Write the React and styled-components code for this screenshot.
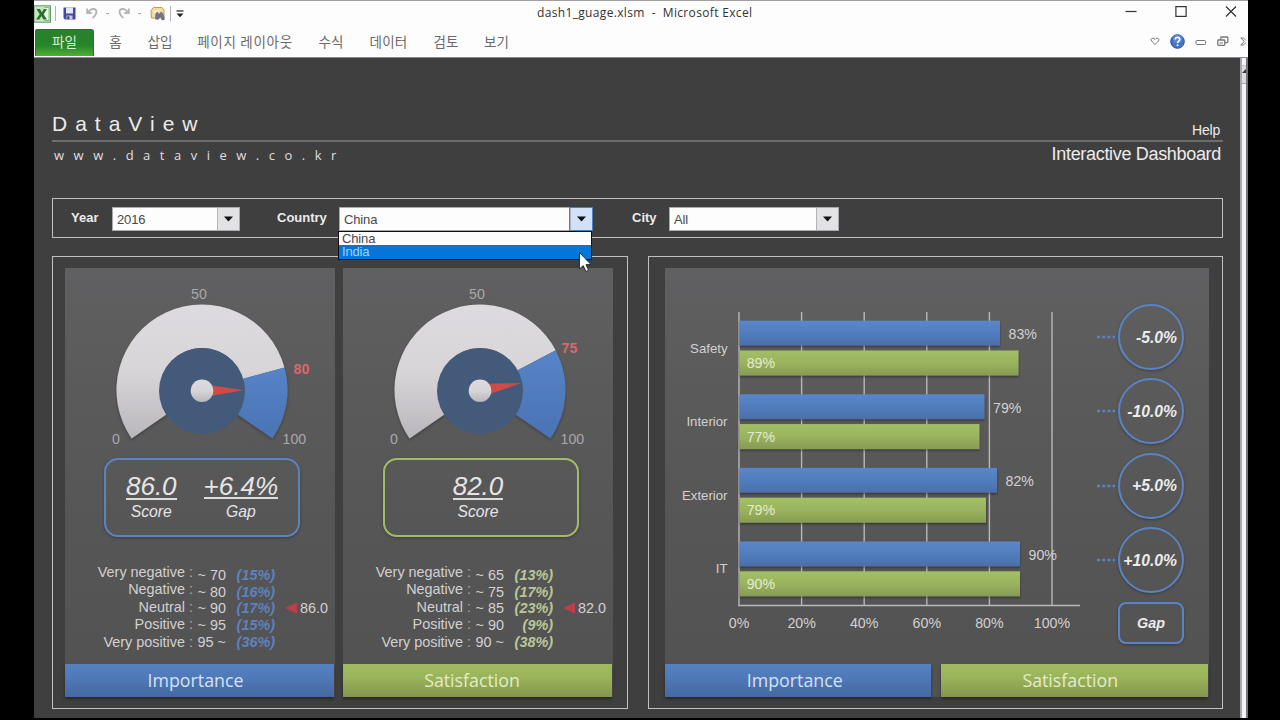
import styled, { createGlobalStyle } from "styled-components";

const BLUE = "#5b83c4";
const GREEN = "#a3bb66";

const GlobalStyle = createGlobalStyle`
  * {
    box-sizing: border-box;
  }
  body {
    margin: 0;
    background-color: #000;
    font-family: "Liberation Sans", Arial, sans-serif;
    overflow: hidden;
  }
  svg {
    display: block;
    flex-shrink: 0;
  }
`;

const Screen = styled.div`
  width: 1280px;
  height: 720px;
  padding: 0 32px 2px 34px;
  overflow: hidden;
  background-color: #000;
`;

const Window = styled.div`
  height: 718px;
  overflow: hidden;
  background-color: #fefdfe;
  border-top: 1px solid #a39fa1;
`;

const TitleBar = styled.div`
  display: grid;
  grid-template-columns: 503px 217px 1fr;
  height: 27px;
`;

const QuickAccess = styled.div`
  display: flex;
  align-items: center;
  height: 25px;
`;

const Divider = styled.span`
  width: 1px;
  height: 15px;
  margin: 0 ${(props) => props.$right}px 0 ${(props) => props.$left}px;
  background-color: #b5b2b8;
`;

const Tick = styled.span`
  width: 3px;
  height: 1px;
  margin: 0 9px 0 8px;
  background-color: #aaa;
`;

const IconSpace = styled.span`
  width: 10px;
`;

const Caption = styled.div`
  font-family: "Open Sans", "Noto Sans", sans-serif;
  font-size: 12px;
  line-height: 24px;
  letter-spacing: 0.34px;
  color: #333;
  white-space: pre;
`;

const WindowButtons = styled.div`
  display: flex;
  justify-content: flex-end;
  gap: 38px;
  padding: 5px 11px 0 0;
`;

const Ribbon = styled.div`
  display: flex;
  align-items: flex-start;
  height: 30px;
  padding: 1px 0 0 1px;
  border-bottom: 1px solid #8c8b8d;
  font-family: "Noto Sans CJK KR", sans-serif;
  font-size: 13.5px;
  line-height: 25px;
  color: #6a6a6a;
`;

const FileTab = styled.div`
  width: 59px;
  height: 27px;
  border-radius: 2px 3px 0 0;
  border: 1px solid #23762a;
  border-bottom: none;
  line-height: 23px;
  text-align: center;
  color: #dcefd4;
  background: linear-gradient(#2b7f2d, #26862a 60%, #4fae35);
`;

const Tab = styled.div`
  width: ${(props) => props.$width}px;
  text-align: center;
  letter-spacing: ${(props) => props.$spacing || 0.2}px;
  white-space: nowrap;
`;

const RibbonTools = styled.div`
  display: flex;
  align-items: center;
  gap: 10px;
  height: 25px;
  margin-left: auto;
  width: 98px;
  overflow: hidden;
`;

const Body = styled.div`
  display: flex;
  height: 660px;
`;

const Sheet = styled.div`
  width: 1206px;
  padding: 0 17px 0 18px;
  background-color: #3f3f3f;
  color: #ecebec;
`;

const ScrollTrack = styled.div`
  width: 8px;
  border-left: 2px solid #aaa8ac;
  border-right: 2px solid #77757a;
  background-color: #f5f3f9;
`;

const ScrollTop = styled.div`
  display: flex;
  align-items: flex-end;
  height: 26px;
  padding-bottom: 6px;
  border-bottom: 1px solid #aaa;
  background: linear-gradient(#f4f3f6 7px, #aaa 7px, #dddce2 8px);
`;

const Header = styled.div`
  display: flex;
  justify-content: space-between;
  align-items: flex-end;
  height: 84px;
  border-bottom: 2px solid #6d6d6d;
`;

const Logo = styled.div`
  margin-bottom: 4px;
  font-size: 21px;
  line-height: 24px;
  letter-spacing: 8px;
`;

const Help = styled.div`
  margin: 0 3px 2px 0;
  font-size: 14px;
  line-height: 16px;
  letter-spacing: -0.2px;
`;

const SubHeader = styled.div`
  display: flex;
  justify-content: space-between;
  height: 56px;
`;

const Url = styled.div`
  margin: 3px 0 0 2px;
  font-family: "Open Sans", "Noto Sans", sans-serif;
  font-size: 13px;
  line-height: 20px;
  letter-spacing: 9.5px;
  color: #e0dee0;
`;

const Tagline = styled.div`
  margin: 2px 2px 0 0;
  font-size: 18px;
  line-height: 20px;
  letter-spacing: -0.32px;
`;

const FilterBar = styled.div`
  display: flex;
  height: 40px;
  padding: 8px 0 0 18px;
  border: 1px solid #c2c1c2;
`;

const FilterLabel = styled.div`
  width: ${(props) => props.$width}px;
  font-size: 13px;
  font-weight: bold;
  line-height: 22px;
`;

const Select = styled.div`
  position: relative;
  display: flex;
  justify-content: space-between;
  width: ${(props) => props.$width}px;
  height: 24px;
  margin-right: ${(props) => props.$gap}px;
  border: 1px solid #aaa8ac;
  background-color: #fefdfe;
  font-size: 13px;
  line-height: 23px;
  letter-spacing: -0.15px;
  color: #4a484a;
  padding-left: 4px;
`;

const Arrow = styled.div`
  display: flex;
  align-items: center;
  justify-content: center;
  width: 22px;
  padding-right: 1px;
  background-color: ${(props) => (props.$active ? "#cfe1fb" : "#e2e1e4")};
  border-left: 1px solid #b4b2b6;
  outline: ${(props) => (props.$active ? "1px solid #4d82bd" : "none")};
`;

const Options = styled.div`
  position: absolute;
  top: 23px;
  left: -2px;
  width: 254px;
  border: 1px solid #0c0c14;
  background-color: #fefdfe;
`;

const Option = styled.div`
  height: ${(props) => (props.$active ? 14 : 13)}px;
  padding-left: 3px;
  line-height: 14px;
  color: ${(props) => (props.$active ? "#9fd3ff" : "#4a484a")};
  background-color: ${(props) => (props.$active ? "#0576d8" : "transparent")};
`;

const Cursor = styled.svg`
  position: absolute;
  top: 43px;
  left: 238px;
  z-index: 2;
`;

const Panels = styled.div`
  display: flex;
  justify-content: space-between;
  margin-top: 18px;
`;

const Panel = styled.div`
  display: flex;
  gap: 8px;
  width: ${(props) => props.$width}px;
  height: 453px;
  padding: 11px 0 0 ${(props) => props.$pad}px;
  border: 1px solid #c2c1c2;
`;

const Card = styled.div`
  display: flex;
  flex-direction: column;
  width: ${(props) => props.$width}px;
  height: 429px;
  background: linear-gradient(#606062, #5a5a5a 30%, #575657 60%, #535253);
`;

const ScoreBox = styled.div`
  display: flex;
  justify-content: center;
  gap: 27px;
  width: 196px;
  height: 79px;
  margin: 0 0 0 ${(props) => props.$left}px;
  padding-top: 14px;
  padding-right: ${(props) => props.$shift}px;
  border: 2px solid ${(props) => props.$color};
  border-radius: 14px;
  box-shadow: 0 1px 3px rgba(0, 0, 0, 0.3);
  font-style: italic;
  text-align: center;
  color: #e6e5e6;
`;

const Big = styled.div`
  height: ${(props) => (props.$tight ? 25 : 26)}px;
  border-bottom: 2px solid #dddcdd;
  font-size: 26px;
  line-height: 25px;
`;

const Small = styled.div`
  margin-top: ${(props) => (props.$tight ? 4 : 3)}px;
  font-size: 15.7px;
  line-height: 18px;
`;

const Breakdown = styled.div`
  display: flex;
  height: 127px;
  padding-top: 27px;
  font-size: 14.4px;
  color: #d2d0d2;
`;

const Names = styled.div`
  width: 120px;
  line-height: 17.4px;
  text-align: right;
`;

const Colons = styled.div`
  width: 12px;
  line-height: 17.4px;
  text-align: center;
  color: #aaa;
`;

const Ranges = styled.div`
  width: 29px;
  padding-top: 3px;
  line-height: 16.7px;
  text-align: right;
  white-space: nowrap;
`;

const Shares = styled.div`
  width: 49px;
  padding-top: 3px;
  line-height: 16.7px;
  text-align: right;
  font-weight: bold;
  font-style: italic;
  color: ${(props) => props.$color};
`;

const Current = styled.div`
  display: flex;
  align-items: center;
  gap: 3px;
  height: 17px;
  margin: 35px 0 0 10px;
`;

const Footer = styled.div`
  display: flex;
  gap: 10px;
  margin-top: auto;
  padding-right: 1px;
`;

const Strip = styled.div`
  flex: 1;
  height: 33px;
  padding-right: ${(props) => props.$shift}px;
  font-family: "Open Sans", "Noto Sans", sans-serif;
  font-size: 17.8px;
  line-height: 33px;
  text-align: center;
  color: ${(props) => (props.$green ? "#e4ecc9" : "#d5e1f6")};
  background: ${(props) =>
    props.$green
      ? "linear-gradient(#9fbb60, #9ab459 40%, #84964f)"
      : "linear-gradient(#5581c3, #4f79b8 40%, #4568a0)"};
  box-shadow: 0 2px 3px rgba(0, 0, 0, 0.4);
`;

const ChartArea = styled.div`
  display: flex;
  margin-left: -1px;
`;

const Gaps = styled.div`
  display: flex;
  flex-direction: column;
  gap: 8.4px;
  padding-top: 36px;
`;

const GapRow = styled.div`
  display: flex;
  align-items: center;
  justify-content: space-between;
  width: 88px;
`;

const Circle = styled.div`
  display: flex;
  align-items: center;
  justify-content: flex-end;
  width: 66px;
  height: 66px;
  padding: 1px 5px 0 0;
  border: 2px solid ${BLUE};
  border-radius: 50%;
  box-shadow: 0 1px 3px rgba(0, 0, 0, 0.3);
  font-size: 15.7px;
  font-weight: bold;
  font-style: italic;
  white-space: nowrap;
`;

const GapLabel = styled.div`
  align-self: flex-end;
  width: 66px;
  height: 42px;
  border: 2px solid ${BLUE};
  border-radius: 8px;
  box-shadow: 0 1px 3px rgba(0, 0, 0, 0.3);
  font-size: 14.3px;
  font-weight: bold;
  font-style: italic;
  line-height: 39px;
  text-align: center;
`;

const levels = [
  "Very negative",
  "Negative",
  "Neutral",
  "Positive",
  "Very positive",
];

const importance = {
  limit: 80,
  score: 86,
  limitPos: [228.5, 105.5],
  ranges: ["~ 70", "~ 80", "~ 90", "~ 95", "95 ~"],
  shares: ["(15%)", "(16%)", "(17%)", "(15%)", "(36%)"],
};

const satisfaction = {
  limit: 75,
  score: 82,
  limitPos: [218.5, 85],
  ranges: ["~ 65", "~ 75", "~ 85", "~ 90", "90 ~"],
  shares: ["(13%)", "(17%)", "(23%)", "(9%)", "(38%)"],
};

const bars = [
  { name: "Safety", blue: 83, green: 89, blueEnd: 336, greenEnd: 354.5 },
  { name: "Interior", blue: 79, green: 77, blueEnd: 320.5, greenEnd: 315.5 },
  { name: "Exterior", blue: 82, green: 79, blueEnd: 333, greenEnd: 322 },
  { name: "IT", blue: 90, green: 90, blueEnd: 356, greenEnd: 356 },
];

const gaps = ["-5.0%", "-10.0%", "+5.0%", "+10.0%"];

// the dial runs from 214.5deg (0) down to -34.5deg (100)
function point(value, r, cx, cy) {
  const a = ((214.5 - value * 2.49) * Math.PI) / 180;
  return `${(cx + r * Math.cos(a)).toFixed(2)} ${(cy - r * Math.sin(a)).toFixed(2)}`;
}

function slice(from, to, cx, cy) {
  const large = (to - from) * 2.49 > 180 ? 1 : 0;
  return `M${point(from, 85.5, cx, cy)} A85.5 85.5 0 ${large} 1 ${point(to, 85.5, cx, cy)} L${point(to, 42, cx, cy)} A42 42 0 ${large} 0 ${point(from, 42, cx, cy)} Z`;
}

function Gauge({ id, data }) {
  const cx = 137;
  const cy = 122;
  const angle = 214.5 - data.score * 2.49;

  return (
    <svg width="270" height="190" fontSize="14.2" fill="#aba7a9">
      <defs>
        <linearGradient id={`${id}-dial`} x1="0" y1="0" x2="0" y2="1">
          <stop offset="0" stopColor="#dddbdf" />
          <stop offset="0.5" stopColor="#d8d5d9" />
          <stop offset="1" stopColor="#b9b7bb" />
        </linearGradient>
        <linearGradient id={`${id}-fill`} x1="0" y1="0" x2="0" y2="1">
          <stop offset="0" stopColor="#5684c8" />
          <stop offset="1" stopColor="#4a73b3" />
        </linearGradient>
        <filter id={`${id}-shadow`}>
          <feDropShadow dx="0" dy="1.5" stdDeviation="1.5" floodOpacity="0.3" />
        </filter>
      </defs>
      <g filter={`url(#${id}-shadow)`}>
        <path d={slice(0, data.limit, cx, cy)} fill={`url(#${id}-dial)`} />
        <path d={slice(data.limit, 100, cx, cy)} fill={`url(#${id}-fill)`} />
      </g>
      <circle cx={cx} cy={cy + 1} r="43" fill="#445a7a" />
      <path
        d="M8 -5.5 L42 0 L8 5.5 Z"
        fill="#cf4a49"
        transform={`translate(${cx} ${cy + 0.5}) rotate(${-angle})`}
      />
      <circle cx={cx} cy={cy + 0.7} r="11.3" fill={`url(#${id}-dial)`} />
      <text x="134" y="31" textAnchor="middle">
        50
      </text>
      <text x="47" y="176">
        0
      </text>
      <text x="217.5" y="176">
        100
      </text>
      <text
        x={data.limitPos[0]}
        y={data.limitPos[1]}
        fontWeight="bold"
        fill="#d8686e"
      >
        {data.limit}
      </text>
    </svg>
  );
}

function ScoreCard({ id, data, title, color, shareColor, green, gap }) {
  return (
    <Card $width={270}>
      <Gauge id={id} data={data} />
      <ScoreBox $color={color} $shift={green ? 6 : 0} $left={green ? 40 : 39}>
        <div>
          <Big>{data.score.toFixed(1)}</Big>
          <Small>Score</Small>
        </div>
        {gap && (
          <div>
            <Big $tight>{gap}</Big>
            <Small $tight>Gap</Small>
          </div>
        )}
      </ScoreBox>
      <Breakdown>
        <Names>
          {levels.map((level) => (
            <div key={level}>{level}</div>
          ))}
        </Names>
        <Colons>
          {levels.map((level) => (
            <div key={level}>:</div>
          ))}
        </Colons>
        <Ranges>
          {data.ranges.map((range) => (
            <div key={range}>{range}</div>
          ))}
        </Ranges>
        <Shares $color={shareColor}>
          {data.shares.map((share, i) => (
            <div key={i}>{share}</div>
          ))}
        </Shares>
        <Current>
          <svg width="12" height="12">
            <path d="M0 6 L12 0.5 V11.5 Z" fill="#bf3d48" />
          </svg>
          {data.score.toFixed(1)}
        </Current>
      </Breakdown>
      <Footer>
        <Strip $green={green} $shift={green ? 11 : 8}>
          {title}
        </Strip>
      </Footer>
    </Card>
  );
}

function BarChart() {
  return (
    <svg width="432" height="395" fontSize="14.2" fill="#d2d0d2">
      <defs>
        <linearGradient id="bar-blue" x1="0" y1="0" x2="0" y2="1">
          <stop offset="0" stopColor="#5a87c9" />
          <stop offset="0.5" stopColor="#507dbd" />
          <stop offset="1" stopColor="#4c6ea9" />
        </linearGradient>
        <linearGradient id="bar-green" x1="0" y1="0" x2="0" y2="1">
          <stop offset="0" stopColor="#a3c064" />
          <stop offset="0.5" stopColor="#9ab35e" />
          <stop offset="1" stopColor="#869b54" />
        </linearGradient>
        <filter id="bar-shadow" x="-5%" width="110%" y="-20%" height="150%">
          <feDropShadow dx="0" dy="1.5" stdDeviation="1.3" floodOpacity="0.4" />
        </filter>
      </defs>
      {[0, 20, 40, 60, 80, 100].map((tick) => (
        <g key={tick}>
          <path
            d={`M${75 + tick * 3.13} 44 V338`}
            stroke="#b9b7b9"
            strokeWidth="1.4"
          />
          <text x={75 + tick * 3.13} y="359.6" textAnchor="middle">
            {tick}%
          </text>
        </g>
      ))}
      <path d="M74.3 337.5 H416" stroke="#b9b7b9" strokeWidth="1.4" />
      {bars.map((bar, i) => (
        <g key={bar.name} transform={`translate(0 ${i * 73.6})`}>
          <g filter="url(#bar-shadow)">
            <rect
              x="75.5"
              y="52.7"
              width={bar.blueEnd - 75.5}
              height="24.8"
              fill="url(#bar-blue)"
            />
            <rect
              x="75.5"
              y="82.5"
              width={bar.greenEnd - 75.5}
              height="25"
              fill="url(#bar-green)"
            />
          </g>
          <text x="63.5" y="84.6" textAnchor="end" fontSize="13.2">
            {bar.name}
          </text>
          <text x={bar.blueEnd + 8.5} y="71.2">
            {bar.blue}%
          </text>
          <text x="82.7" y="100.3" fill="#e3ebcf">
            {bar.green}%
          </text>
        </g>
      ))}
    </svg>
  );
}

function DownArrow() {
  return (
    <svg width="9" height="6">
      <path d="M0 0.5 H9 L4.5 5.5 Z" fill="#111" />
    </svg>
  );
}

function QuickAccessIcons() {
  return (
    <QuickAccess>
      <svg width="17" height="18">
        <rect x="0" y="0.8" width="16.5" height="16.4" fill="#c9e3c4" stroke="#5d9a64" />
        <path d="M10.5 2.5 H15 V15.5 H10.5" fill="#eef7ea" stroke="#86b889" />
        <path
          d="M2.5 4 H6 L7.8 7.3 L9.8 4 H13 L9.6 9.2 L13 14.5 H9.4 L7.4 11 L5.3 14.5 H2 L5.7 9.2 Z"
          fill="#28712f"
        />
      </svg>
      <Divider $left={4} $right={7} />
      <svg width="13" height="13">
        <path d="M0.5 0.5 H12.5 V12.5 H2 L0.5 11 Z" fill="#4548a0" />
        <rect x="3" y="0.5" width="7" height="6" fill="#e6e7f5" />
        <rect x="3.5" y="8.5" width="6" height="4" fill="#c5c6e0" />
        <rect x="4.3" y="9.3" width="2" height="3" fill="#35387f" />
      </svg>
      <IconSpace />
      <svg width="12" height="13">
        <path
          d="M1.2 1.5 V6 H5.6 M1.6 5.6 L4.6 2.8 C7.2 1.2 10.6 2 10.4 5.2 C10.2 7.8 8.6 9.2 6.6 11"
          fill="none"
          stroke="#b5b3ba"
          strokeWidth="1.8"
        />
      </svg>
      <Tick />
      <svg width="12" height="13">
        <path
          d="M10.8 1.5 V6 H6.4 M10.4 5.6 L7.4 2.8 C4.8 1.2 1.4 2 1.6 5.2 C1.8 7.8 3.4 9.2 5.4 11"
          fill="none"
          stroke="#b5b3ba"
          strokeWidth="1.8"
        />
      </svg>
      <Tick />
      <svg width="16" height="16">
        <path
          d="M1 4.5 L3.5 1.5 H12 L14 4 V12 H1.5 Z"
          fill="#f0df9d"
          stroke="#b39f63"
        />
        <path d="M4 4.5 H10 L8 7 H4 Z" fill="#faf4d6" />
        <path
          d="M5.5 7.5 L7.5 5.5 L9 8 L11 5.5 L13.5 8 L15 13.5 L11.8 14.5 L10.5 11 L8 14 L5 13 Z"
          fill="#77728c"
        />
      </svg>
      <Divider $left={4} $right={5} />
      <svg width="8" height="8">
        <path d="M0.5 1 H7.5" stroke="#222" strokeWidth="1.2" />
        <path d="M0.5 3.5 H7.5 L4 7.3 Z" fill="#222" />
      </svg>
    </QuickAccess>
  );
}

function App() {
  return (
    <Screen>
      <GlobalStyle />
      <Window>
        <TitleBar>
          <QuickAccessIcons />
          <Caption>{"dash1_guage.xlsm  -  Microsoft Excel"}</Caption>
          <WindowButtons>
            <svg width="12" height="12">
              <path d="M0.5 5.5 H11.5" stroke="#333" strokeWidth="1.2" />
            </svg>
            <svg width="12" height="12">
              <rect x="0.9" y="0.6" width="10.2" height="9.8" fill="none" stroke="#333" strokeWidth="1.2" />
            </svg>
            <svg width="12" height="12">
              <path d="M1 0.5 L11 10.5 M11 0.5 L1 10.5" stroke="#333" strokeWidth="1.2" />
            </svg>
          </WindowButtons>
        </TitleBar>
        <Ribbon>
          <FileTab>파일</FileTab>
          <Tab $width={43}>홈</Tab>
          <Tab $width={46}>삽입</Tab>
          <Tab $width={124} $spacing={0.7}>페이지 레이아웃</Tab>
          <Tab $width={48}>수식</Tab>
          <Tab $width={67}>데이터</Tab>
          <Tab $width={48}>검토</Tab>
          <Tab $width={53}>보기</Tab>
          <RibbonTools>
            <svg width="10" height="9">
              <path
                d="M1 2.5 C1.5 0.8 4 0.8 5 2.5 C6 0.8 8.5 0.8 9 2.5 C8.5 4.5 6.5 6 5 7.5 C3.5 6 1.5 4.5 1 2.5 Z"
                fill="none"
                stroke="#777"
              />
            </svg>
            <svg width="15" height="15">
              <circle cx="7.5" cy="7.5" r="6.8" fill="#4573c4" stroke="#2c529b" />
              <circle cx="7.5" cy="5" r="4.5" fill="#6f97dc" opacity="0.6" />
              <path
                d="M5.2 5.6 C5.2 2.6 9.9 2.8 9.8 5.5 C9.8 7.1 7.6 7.1 7.6 9.1"
                fill="none"
                stroke="#fff"
                strokeWidth="1.6"
              />
              <circle cx="7.6" cy="11.3" r="1" fill="#fff" />
            </svg>
            <svg width="12" height="10">
              <rect x="1" y="3.5" width="9.5" height="4" rx="0.8" fill="none" stroke="#777" />
            </svg>
            <svg width="12" height="11">
              <rect x="3.8" y="1" width="7" height="5.6" rx="0.8" fill="#fff" stroke="#777" strokeWidth="1.3" />
              <rect x="0.8" y="4" width="7" height="5.4" rx="0.8" fill="#fff" stroke="#777" strokeWidth="1.3" />
              <path d="M2.5 7 H6" stroke="#777" />
            </svg>
            <svg width="12" height="10">
              <path d="M1.5 1 H4.5 L7 3.5 M1.5 8 H4.5 L7 5.5 M2 1.3 L5.3 4.5 L2 7.7" fill="none" stroke="#777" />
            </svg>
          </RibbonTools>
        </Ribbon>
        <Body>
          <Sheet>
            <Header>
              <Logo>DataView</Logo>
              <Help>Help</Help>
            </Header>
            <SubHeader>
              <Url>www.dataview.co.kr</Url>
              <Tagline>Interactive Dashboard</Tagline>
            </SubHeader>
            <FilterBar>
              <FilterLabel $width={41}>Year</FilterLabel>
              <Select $width={128} $gap={37}>
                2016
                <Arrow>
                  <DownArrow />
                </Arrow>
              </Select>
              <FilterLabel $width={62}>Country</FilterLabel>
              <Select $width={254} $gap={39}>
                China
                <Arrow $active>
                  <DownArrow />
                </Arrow>
                <Options>
                  <Option>China</Option>
                  <Option $active>India</Option>
                </Options>
                <Cursor width="16" height="24">
                  <path
                    d="M1.5 1.5 V18 L5.2 14.6 L8 20.5 L10.6 19.3 L8 13.6 H13 Z"
                    fill="#fff"
                    stroke="#222"
                    strokeWidth="0.9"
                  />
                </Cursor>
              </Select>
              <FilterLabel $width={37}>City</FilterLabel>
              <Select $width={170} $gap={0}>
                All
                <Arrow>
                  <DownArrow />
                </Arrow>
              </Select>
            </FilterBar>
            <Panels>
              <Panel $width={576} $pad={12}>
                <ScoreCard
                  id="imp"
                  data={importance}
                  title="Importance"
                  color={BLUE}
                  shareColor="#5d82be"
                  gap="+6.4%"
                />
                <ScoreCard
                  id="sat"
                  data={satisfaction}
                  title="Satisfaction"
                  color={GREEN}
                  shareColor="#bac795"
                  green
                />
              </Panel>
              <Panel $width={575} $pad={16}>
                <Card $width={544}>
                  <ChartArea>
                    <BarChart />
                    <Gaps>
                      {gaps.map((gap) => (
                        <GapRow key={gap}>
                          <svg width="20" height="4">
                            <path
                              d="M1 2 H19"
                              stroke={BLUE}
                              strokeWidth="2.6"
                              strokeDasharray="3 2.2"
                            />
                          </svg>
                          <Circle>{gap}</Circle>
                        </GapRow>
                      ))}
                      <GapLabel>Gap</GapLabel>
                    </Gaps>
                  </ChartArea>
                  <Footer>
                    <Strip $shift={6}>Importance</Strip>
                    <Strip $green $shift={8}>
                      Satisfaction
                    </Strip>
                  </Footer>
                </Card>
              </Panel>
            </Panels>
          </Sheet>
          <ScrollTrack>
            <ScrollTop>
              <svg width="4" height="8">
                <path d="M0 4 L4 0 V4 Z" fill="#333" />
              </svg>
            </ScrollTop>
          </ScrollTrack>
        </Body>
      </Window>
    </Screen>
  );
}

export default App;
